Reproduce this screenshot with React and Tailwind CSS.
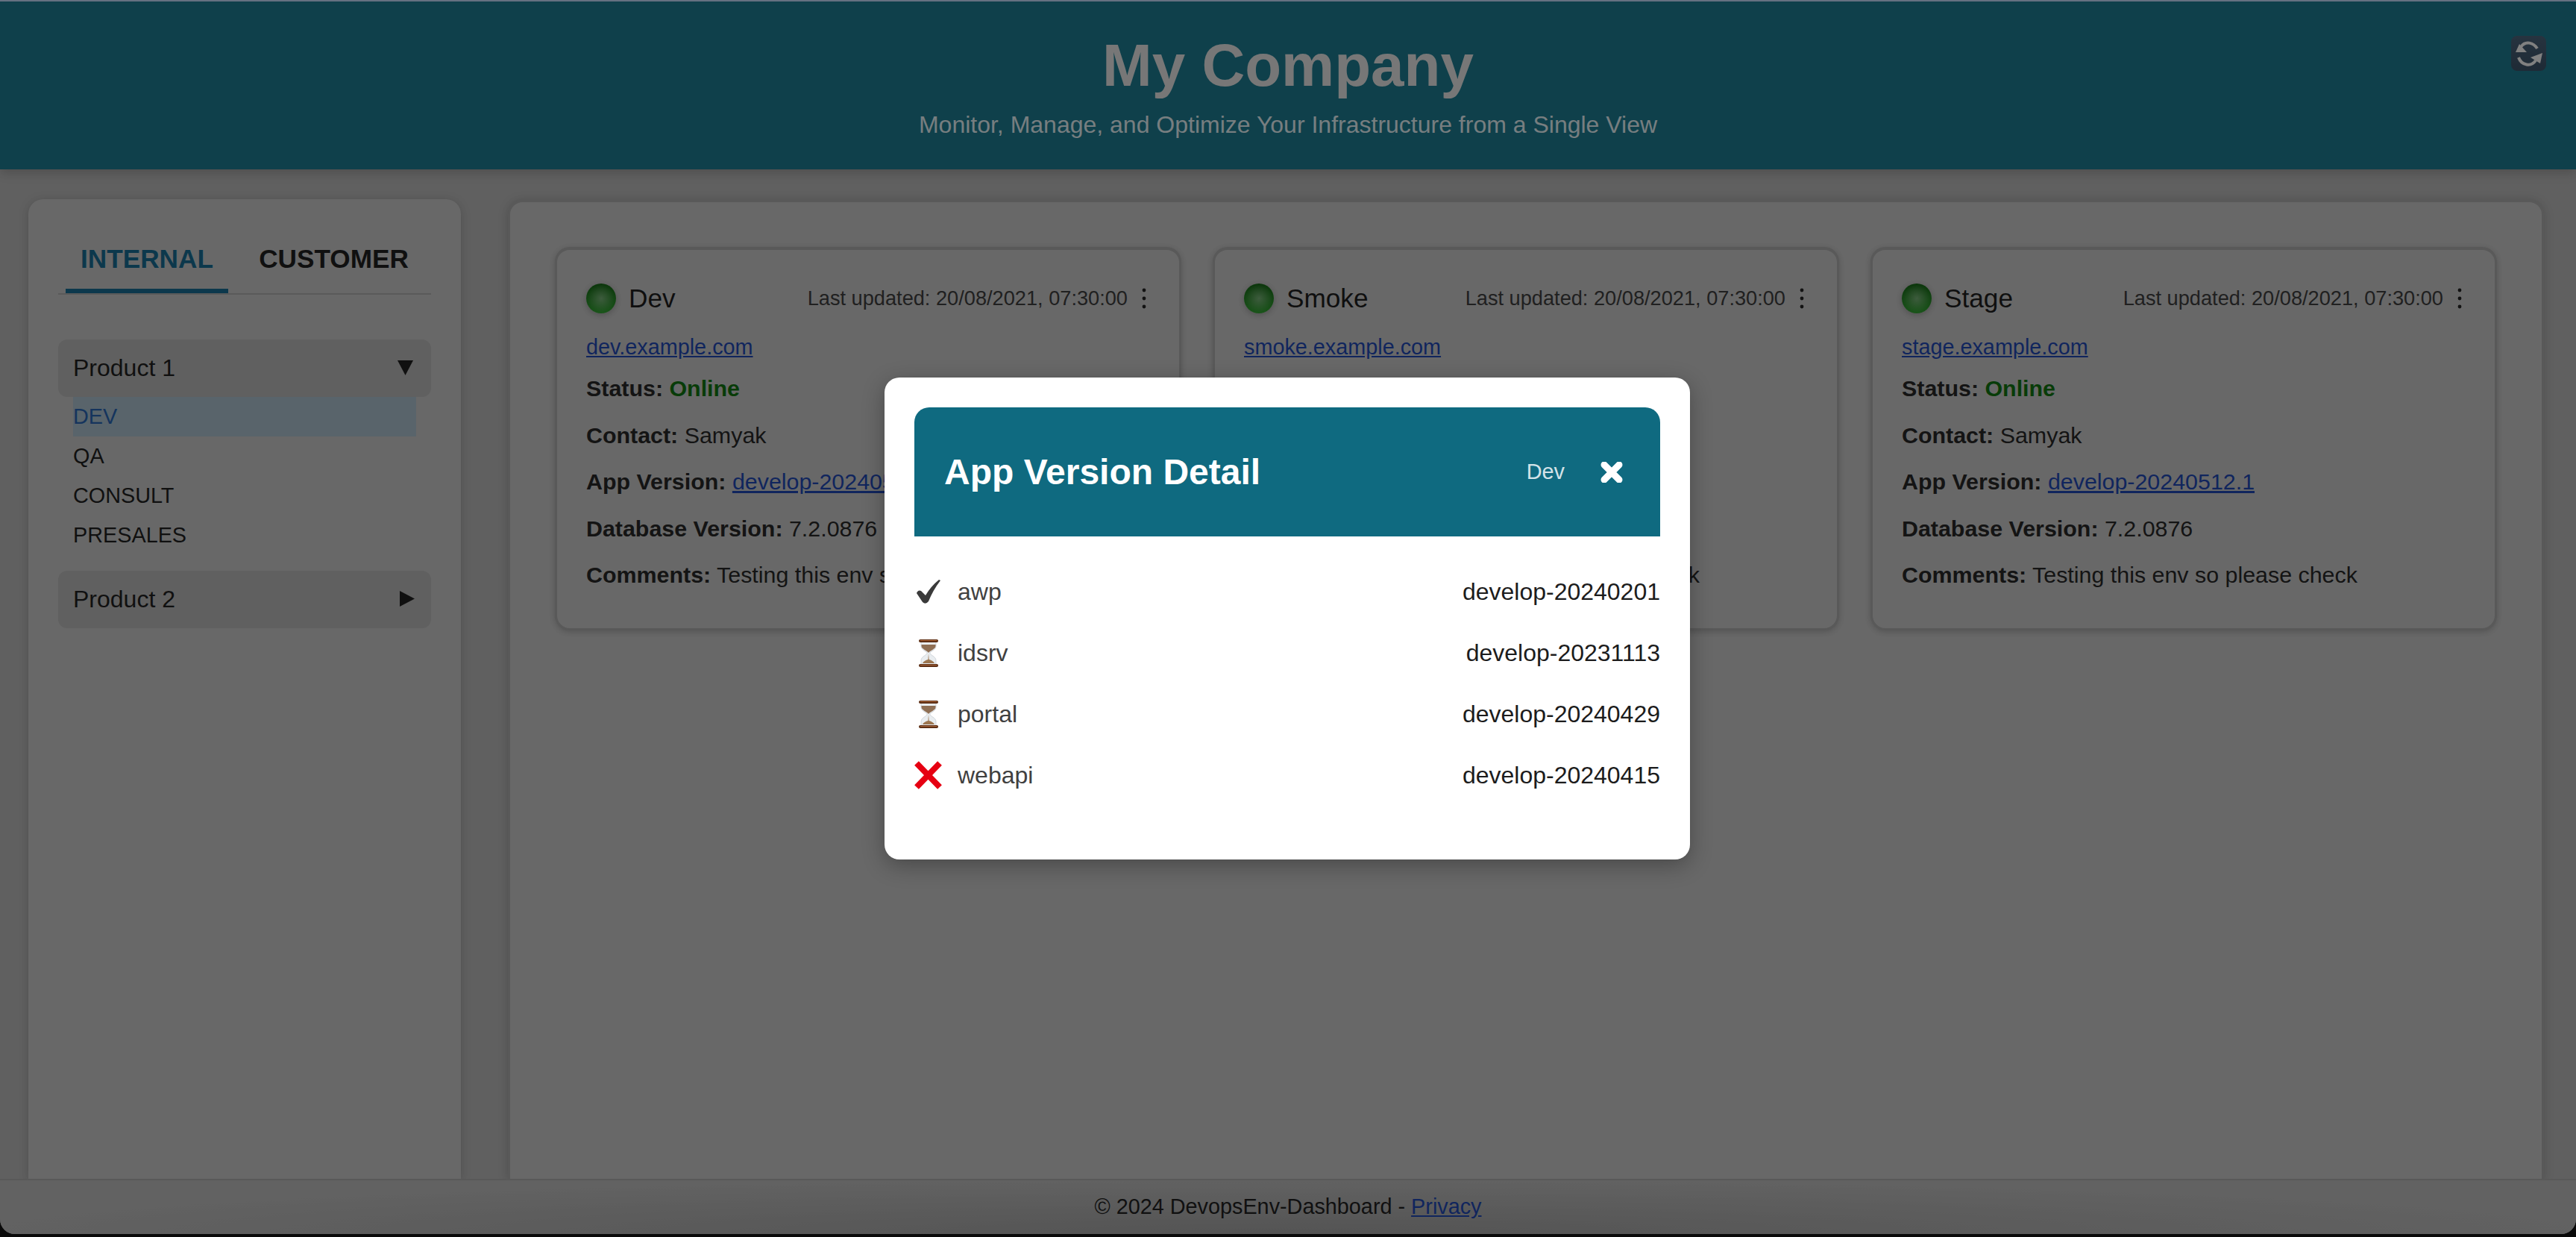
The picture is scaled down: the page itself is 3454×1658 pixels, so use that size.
import React from 'react';

const cards = [
  { name: 'Dev', url: 'dev.example.com' },
  { name: 'Smoke', url: 'smoke.example.com' },
  { name: 'Stage', url: 'stage.example.com' },
];

const versions = [
  { name: 'awp', version: 'develop-20240201', state: 'ok' },
  { name: 'idsrv', version: 'develop-20231113', state: 'wait' },
  { name: 'portal', version: 'develop-20240429', state: 'wait' },
  { name: 'webapi', version: 'develop-20240415', state: 'fail' },
];

function RefreshIcon() {
  return (
    <svg width="47" height="47" viewBox="0 0 47 47" className="block">
      <defs>
        <linearGradient id="refreshBg" x1="0" y1="0" x2="0" y2="1">
          <stop offset="0" stopColor="#41566a" />
          <stop offset="1" stopColor="#33475a" />
        </linearGradient>
      </defs>
      <rect width="47" height="47" rx="8" fill="url(#refreshBg)" />
      <path d="M35 17 C30 9 19 6 13 15" fill="none" stroke="#d6d6d6" strokeWidth="4" />
      <path d="M6 22 L21 22 L11 11 Z" fill="#d6d6d6" />
      <path d="M10 29 C14 40 27 42 33 33" fill="none" stroke="#d6d6d6" strokeWidth="4" />
      <path d="M42 23 L26 29 L39 37 Z" fill="#d6d6d6" />
    </svg>
  );
}

function Kebab() {
  return (
    <svg width="6" height="28" viewBox="0 0 6 28" className="block">
      <circle cx="3" cy="3" r="2.4" fill="#1f1f1f" />
      <circle cx="3" cy="14" r="2.4" fill="#1f1f1f" />
      <circle cx="3" cy="25" r="2.4" fill="#1f1f1f" />
    </svg>
  );
}

function StatusIcon({ state }) {
  if (state === 'ok') {
    return (
      <svg width="34" height="33" viewBox="0 0 34 33" className="block">
        <path d="M1 18 Q3 13 7 15 L13 21 Q20 9 31 0 L33 1 Q23 14 17 29 Q13 34 9 30 Z" fill="#3a3a3a" />
      </svg>
    );
  }
  if (state === 'fail') {
    return (
      <svg width="37" height="38" viewBox="0 0 37 38" className="block">
        <path d="M3 3 L34 35 M34 3 L3 35" stroke="#e60012" strokeWidth="8" fill="none" />
      </svg>
    );
  }
  return (
    <svg width="26" height="37" viewBox="0 0 26 37" className="block">
      <path d="M3 3 H23 V9 C23 14 15 16 15 18.5 C15 21 23 23 23 28 V34 H3 V28 C3 23 11 21 11 18.5 C11 16 3 14 3 9 Z" fill="#e9edf0" stroke="#b9c0c6" strokeWidth="0.6" />
      <path d="M3.5 7 H22.5 V9 C22.5 13 14.5 15 13 18 C11.5 15 3.5 13 3.5 9 Z" fill="#8f6f54" />
      <path d="M13 19 L13.6 27 C17 28 20 29.5 21 32 H5 C6 29.5 9 28 12.4 27 Z" fill="#9c7650" />
      <rect x="0" y="0" width="26" height="4" rx="2" fill="#5e2f14" />
      <rect x="0" y="33" width="26" height="4" rx="2" fill="#5e2f14" />
      <rect x="2" y="1" width="22" height="1" fill="#a8653a" />
      <rect x="2" y="34" width="22" height="1" fill="#a8653a" />
    </svg>
  );
}

function Card({ card }) {
  return (
    <div className="border-[3px] border-t-4 border-[#949494] rounded-[20px] bg-[#aeaeae] pt-[45px] pb-[40px] pl-[39px] pr-[43px] shadow-[0_2px_8px_rgba(0,0,0,0.2)]">
      <div className="flex items-center h-10">
        <div className="w-10 h-10 rounded-full bg-[radial-gradient(circle,rgba(160,184,160,0.55),transparent_65%),linear-gradient(#145a14,#2c8c2c)] shadow-[0_2px_8px_rgba(0,0,0,0.25)]" />
        <span className="ml-[17px] text-[35.2px] leading-10 text-[#1a1a1a]">{card.name}</span>
        <span className="ml-auto text-[27.2px] text-[#363636]">Last updated: 20/08/2021, 07:30:00</span>
        <span className="ml-[19px] mr-[1px]"><Kebab /></span>
      </div>
      <a className="block mt-6 text-[28.8px] leading-[42px] text-[#1c3f9c] underline">{card.url}</a>
      <div className="mt-[3px] text-[30.4px] leading-[62.5px] text-[#222222]">
        <p><b>Status:</b> <b className="text-[#0e640e]">Online</b></p>
        <p><b>Contact:</b> Samyak</p>
        <p><b>App Version:</b> <a className="text-[#1c3f9c] underline">develop-20240512.1</a></p>
        <p><b>Database Version:</b> 7.2.0876</p>
        <p><b>Comments:</b> Testing this env so please check</p>
      </div>
    </div>
  );
}

function Sidebar() {
  return (
    <aside className="w-[580px] rounded-t-[20px] bg-[#aeaeae] px-10 pt-10 shadow-[0_2px_14px_rgba(0,0,0,0.18)]">
      <div className="flex gap-[22px] pl-[10px] border-b-2 border-[#979797]">
        <div className="h-[86px] w-[218px] flex items-center justify-center border-b-[6px] border-[#155e7f] text-[35.2px] font-bold text-[#155e7f]">INTERNAL</div>
        <div className="h-[86px] w-[239px] flex items-center justify-center border-b-[6px] border-transparent text-[35.2px] font-bold text-[#1c1c1c]">CUSTOMER</div>
      </div>
      <div className="mt-[60px] h-[77px] rounded-xl bg-[#a0a0a0] flex items-center justify-between pl-[20px] pr-[24px] pb-[2px] text-[32px] text-[#1c1c1c]">
        Product 1
        <svg width="21" height="20" viewBox="0 0 21 20"><path d="M0 0 H21 L10.5 20 Z" fill="#1c1c1c" /></svg>
      </div>
      <ul className="mx-5 text-[28.8px] leading-[53px] text-[#1c1c1c]">
        <li className="bg-[#94a7b2] text-[#24589c]">DEV</li>
        <li>QA</li>
        <li>CONSULT</li>
        <li>PRESALES</li>
      </ul>
      <div className="mt-[21px] h-[77px] rounded-xl bg-[#a0a0a0] flex items-center justify-between pl-[20px] pr-[22px] pb-[2px] text-[32px] text-[#1c1c1c]">
        Product 2
        <svg width="20" height="21" viewBox="0 0 20 21"><path d="M0 0 V21 L20 10.5 Z" fill="#1c1c1c" /></svg>
      </div>
    </aside>
  );
}

function VersionModal() {
  return (
    <div className="w-[1080px] h-[646px] rounded-[20px] bg-white p-10 shadow-[0_8px_30px_rgba(0,0,0,0.3)]">
      <div className="h-[173px] rounded-t-[20px] bg-[#0f6a80] flex items-center pl-10 pr-[50px] text-white">
        <h2 className="text-[48px] font-bold">App Version Detail</h2>
        <span className="ml-auto text-[28.8px] text-[#d3e3e8]">Dev</span>
        <svg width="30" height="28" viewBox="0 0 30 28" className="ml-[48px]">
          <path d="M5 4 L25 24 M25 4 L5 24" stroke="#ffffff" strokeWidth="9" strokeLinecap="round" fill="none" />
        </svg>
      </div>
      <div className="mt-[33px]">
        {versions.map((v) => (
          <div key={v.name} className="h-[82px] flex items-center text-[32px]">
            <div className="w-[37px] flex justify-center"><StatusIcon state={v.state} /></div>
            <span className="ml-[21px] text-[#404040]">{v.name}</span>
            <span className="ml-auto text-[#1c1c1c]">{v.version}</span>
          </div>
        ))}
      </div>
    </div>
  );
}

export default function App() {
  return (
    <div className="relative h-[1658px] bg-[#111111] font-['Liberation_Sans',Arial,sans-serif]">
      <div className="h-[1654px] flex flex-col overflow-hidden rounded-b-[20px] border-t-2 border-[#a8bdd8] bg-[#a0a0a0]">
        <header className="relative z-10 h-[225px] shrink-0 bg-[#196c7e] pt-[38px] text-center shadow-[0_4px_14px_rgba(0,0,0,0.2)]">
          <h1 className="text-[80px] leading-[96px] font-bold text-[#c6c6c6]">My Company</h1>
          <p className="mt-[11px] text-[32px] leading-10 text-[#c6d2d5]">Monitor, Manage, and Optimize Your Infrastructure from a Single View</p>
          <button className="absolute top-[46px] right-[40px]"><RefreshIcon /></button>
        </header>

        <div className="flex-1 min-h-0 flex gap-[63px] pt-10 pl-[38px] pr-[43px]">
          <Sidebar />
          <main className="flex-1 box-border rounded-t-[20px] border-[3px] border-t-4 border-b-0 border-[#949494] bg-[#aeaeae] px-[60px] pt-[60px] shadow-[0_2px_14px_rgba(0,0,0,0.18)]">
            <div className="grid grid-cols-3 gap-[42px]">
              {cards.map((c) => <Card key={c.name} card={c} />)}
            </div>
          </main>
        </div>

        <footer className="relative h-[74px] shrink-0 flex items-center justify-center border-t-2 border-[#949494] bg-[radial-gradient(ellipse_at_50%_100%,#8c8c8c,#a4a4a4_75%)] text-[28.8px] text-[#1c1c1c]">
          <span>© 2024 DevopsEnv-Dashboard - <a className="text-[#1c3f9c] underline">Privacy</a></span>
        </footer>
      </div>

      <div className="absolute inset-0 z-20 flex items-center justify-center pr-[2px] bg-black/40">
        <VersionModal />
      </div>
    </div>
  );
}
